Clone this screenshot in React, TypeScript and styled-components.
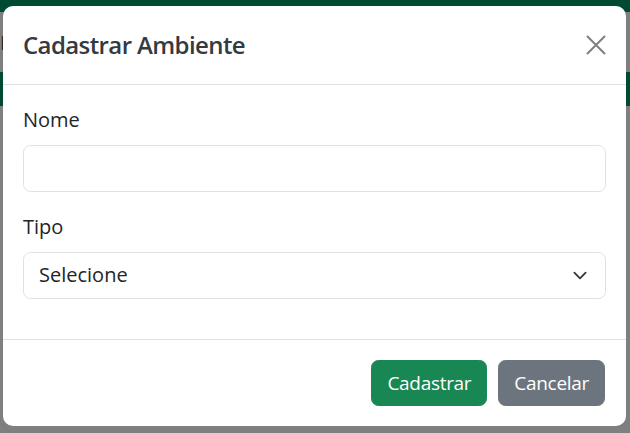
import React from "react";
import styled, { createGlobalStyle } from "styled-components";

const Global = createGlobalStyle`
  html, body { margin: 0; padding: 0; }
  body {
    width: 630px;
    height: 433px;
    overflow: hidden;
    background: #ffffff;
    font-family: "Open Sans", "Noto Sans", sans-serif;
    color: #212529;
  }
  * { box-sizing: border-box; }
`;

const Page = styled.div`
  position: relative;
  width: 630px;
  height: 433px;
  display: flex;
  flex-direction: column;
  background: #ffffff;
`;

const TopBar = styled.div`
  height: 12px;
  background: #009466;
`;

const PageHead = styled.div`
  height: 60px;
  display: flex;
  align-items: center;
  padding-left: 0;
  font-size: 20px;
  color: #444;
`;

const NavBand = styled.div`
  height: 34px;
  background: #009466;
`;

const Backdrop = styled.div`
  position: absolute;
  inset: 0;
  background: rgba(0, 0, 0, 0.5);
  display: flex;
  align-items: flex-start;
  padding: 6px 0 0 3px;
`;

const Dialog = styled.div`
  width: 623px;
  background: #ffffff;
  border-radius: 10px;
  display: flex;
  flex-direction: column;
  overflow: hidden;
`;

const Header = styled.div`
  display: flex;
  align-items: center;
  justify-content: space-between;
  padding: 20px;
  border-bottom: 1px solid #dee2e6;
`;

const Title = styled.h5`
  margin: 0;
  font-size: 24px;
  font-weight: 600;
  letter-spacing: -0.6px;
  line-height: 37.5px;
  color: #343a40;
`;

const CloseButton = styled.button`
  width: 20px;
  height: 20px;
  padding: 0;
  border: 0;
  background: transparent;
  display: flex;
  align-items: center;
  justify-content: center;
  cursor: pointer;
`;

const Body = styled.div`
  padding: 20px;
`;

const Group = styled.div`
  margin-bottom: 20px;
  display: flex;
  flex-direction: column;
`;

const Label = styled.label`
  font-size: 20px;
  line-height: 30px;
  margin-bottom: 10px;
  color: #212529;
`;

const Field = styled.div`
  height: 47px;
  border: 1px solid #dee2e6;
  border-radius: 7.5px;
  padding: 7.5px 15px;
  display: flex;
  align-items: center;
  justify-content: space-between;
  font-size: 20px;
  line-height: 30px;
  color: #212529;
  background: #fff;
`;

const Chevron = styled.svg`
  width: 20px;
  height: 15px;
`;

const Footer = styled.div`
  border-top: 1px solid #dee2e6;
  padding: 20px 21px 20px 20px;
  display: flex;
  justify-content: flex-end;
  gap: 11px;
`;

const Button = styled.button<{ $variant: "success" | "secondary" }>`
  height: 46px;
  padding: 0 15px;
  border: 1px solid ${(p) => (p.$variant === "success" ? "#198754" : "#6c757d")};
  background: ${(p) => (p.$variant === "success" ? "#198754" : "#6c757d")};
  color: #fff;
  border-radius: 7.5px;
  font-family: inherit;
  font-size: 19px;
  letter-spacing: -0.3px;
  line-height: 30px;
  cursor: pointer;
`;

export default function App() {
  return (
    <>
      <Global />
      <Page>
        <TopBar />
        <PageHead>F</PageHead>
        <NavBand />
        <Backdrop>
          <Dialog>
            <Header>
              <Title>Cadastrar Ambiente</Title>
              <CloseButton aria-label="Fechar">
                <svg width="20" height="20" viewBox="0 0 20 20">
                  <path d="M1 1L19 19M19 1L1 19" stroke="#7f7f7f" strokeWidth="2" fill="none" />
                </svg>
              </CloseButton>
            </Header>
            <Body>
              <Group>
                <Label>Nome</Label>
                <Field />
              </Group>
              <Group>
                <Label>Tipo</Label>
                <Field>
                  <span>Selecione</span>
                  <Chevron viewBox="0 0 16 16">
                    <path d="M2 5l6 6 6-6" fill="none" stroke="#343a40" strokeWidth="2" strokeLinecap="round" strokeLinejoin="round" />
                  </Chevron>
                </Field>
              </Group>
            </Body>
            <Footer>
              <Button $variant="success">Cadastrar</Button>
              <Button $variant="secondary">Cancelar</Button>
            </Footer>
          </Dialog>
        </Backdrop>
      </Page>
    </>
  );
}
